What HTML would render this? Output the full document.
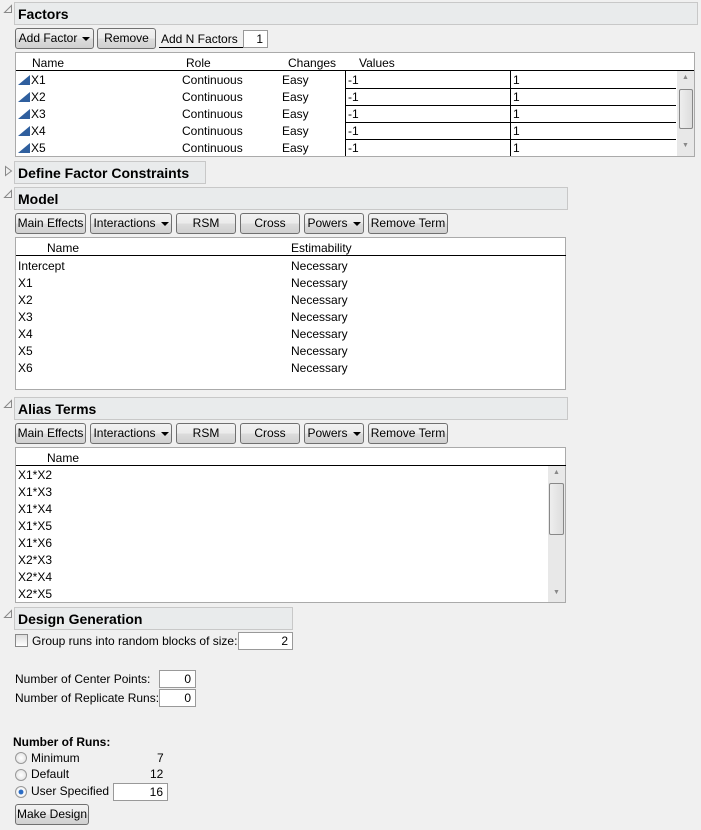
<!DOCTYPE html>
<html><head><meta charset="utf-8"><style>
*{box-sizing:border-box;margin:0;padding:0}
body{width:701px;height:830px;background:#f0f0f0;font-family:"Liberation Sans",sans-serif;font-size:12px;color:#000;position:relative;overflow:hidden}
.a{position:absolute;white-space:nowrap}
.hdr{position:absolute;background:#e9ebec;border:1px solid #c8c8c8;font-weight:bold;font-size:14px;padding:3px 0 0 3px;height:23px}
.tri{position:absolute}
.btn{position:absolute;height:21px;border:1px solid #707070;border-radius:3px;background:linear-gradient(#f2f2f2,#ebebeb 50%,#dcdcdc 51%,#d0d0d0);text-align:center;line-height:19px;font-size:12px}
.btn .dd{display:inline-block;width:0;height:0;border-left:4px solid transparent;border-right:4px solid transparent;border-top:4px solid #000;vertical-align:middle;margin-left:5px}
.box{position:absolute;background:#fff;border:1px solid #aaa}
.inp{position:absolute;background:#fff;border:1px solid #999;text-align:right;padding-right:4px;line-height:16px;height:18px}
.hl{position:absolute;height:1px;background:#000}
.vl{position:absolute;width:1px;background:#000}
.sb{position:absolute;background:#e8e8e8}
.thumb{position:absolute;border:1px solid #888;border-radius:2px;background:linear-gradient(90deg,#eee,#ddd)}
.fi{position:absolute;width:0;height:0;border-left:12px solid transparent;border-bottom:10px solid #2f5f9e}
.rad{position:absolute;width:12px;height:12px;border-radius:50%;border:1px solid #999;background:radial-gradient(#fff,#ddd)}
.ar{position:absolute;font-size:7px;color:#888}
</style></head><body>

<svg class="tri" style="left:3px;top:4px" width="10" height="10"><path d="M1.5 8.5 L8.5 8.5 L8.5 1.5 Z" fill="none" stroke="#888"/></svg>
<div class="hdr" style="left:14px;top:2px;width:684px">Factors</div>
<div class="btn" style="left:15px;top:28px;width:79px">Add Factor<span class="dd"></span></div>
<div class="btn" style="left:97px;top:28px;width:59px">Remove</div>
<div class="a" style="left:161px;top:32px">Add N Factors</div>
<div class="hl" style="left:159px;top:47px;width:84px"></div>
<div class="inp" style="left:243px;top:30px;width:25px">1</div>

<div class="box" style="left:15px;top:52px;width:680px;height:105px"></div>
<div class="a" style="left:32px;top:56px">Name</div>
<div class="a" style="left:186px;top:56px">Role</div>
<div class="a" style="left:288px;top:56px">Changes</div>
<div class="a" style="left:359px;top:56px">Values</div>
<div class="hl" style="left:16px;top:70px;width:678px"></div>
<div class="vl" style="left:345px;top:71px;height:85px"></div>
<div class="vl" style="left:510px;top:71px;height:85px"></div>
<div class="hl" style="left:345px;top:88px;width:331px"></div>
<div class="hl" style="left:345px;top:105px;width:331px"></div>
<div class="hl" style="left:345px;top:122px;width:331px"></div>
<div class="hl" style="left:345px;top:139px;width:331px"></div>
<div class="sb" style="left:677px;top:71px;width:17px;height:85px"></div>
<div class="thumb" style="left:679px;top:89px;width:14px;height:40px"></div>
<div class="ar" style="left:682px;top:74px">▲</div><div class="ar" style="left:682px;top:142px">▼</div>

<div class="fi" style="left:18px;top:75px"></div><div class="a" style="left:31px;top:73px">X1</div><div class="a" style="left:182px;top:73px">Continuous</div><div class="a" style="left:282px;top:73px">Easy</div><div class="a" style="left:348px;top:73px">-1</div><div class="a" style="left:513px;top:73px">1</div>
<div class="fi" style="left:18px;top:92px"></div><div class="a" style="left:31px;top:90px">X2</div><div class="a" style="left:182px;top:90px">Continuous</div><div class="a" style="left:282px;top:90px">Easy</div><div class="a" style="left:348px;top:90px">-1</div><div class="a" style="left:513px;top:90px">1</div>
<div class="fi" style="left:18px;top:109px"></div><div class="a" style="left:31px;top:107px">X3</div><div class="a" style="left:182px;top:107px">Continuous</div><div class="a" style="left:282px;top:107px">Easy</div><div class="a" style="left:348px;top:107px">-1</div><div class="a" style="left:513px;top:107px">1</div>
<div class="fi" style="left:18px;top:126px"></div><div class="a" style="left:31px;top:124px">X4</div><div class="a" style="left:182px;top:124px">Continuous</div><div class="a" style="left:282px;top:124px">Easy</div><div class="a" style="left:348px;top:124px">-1</div><div class="a" style="left:513px;top:124px">1</div>
<div class="fi" style="left:18px;top:143px"></div><div class="a" style="left:31px;top:141px">X5</div><div class="a" style="left:182px;top:141px">Continuous</div><div class="a" style="left:282px;top:141px">Easy</div><div class="a" style="left:348px;top:141px">-1</div><div class="a" style="left:513px;top:141px">1</div>

<svg class="tri" style="left:4px;top:165px" width="10" height="12"><path d="M1.5 1.5 L7.5 6 L1.5 10.5 Z" fill="none" stroke="#888"/></svg>
<div class="hdr" style="left:14px;top:161px;width:192px">Define Factor Constraints</div>

<svg class="tri" style="left:3px;top:189px" width="10" height="10"><path d="M1.5 8.5 L8.5 8.5 L8.5 1.5 Z" fill="none" stroke="#888"/></svg>
<div class="hdr" style="left:14px;top:187px;width:554px">Model</div>
<div class="btn" style="left:15px;top:213px;width:71px">Main Effects</div>
<div class="btn" style="left:90px;top:213px;width:82px">Interactions<span class="dd"></span></div>
<div class="btn" style="left:176px;top:213px;width:60px">RSM</div>
<div class="btn" style="left:240px;top:213px;width:60px">Cross</div>
<div class="btn" style="left:304px;top:213px;width:60px">Powers<span class="dd"></span></div>
<div class="btn" style="left:368px;top:213px;width:80px">Remove Term</div>
<div class="box" style="left:15px;top:237px;width:551px;height:153px"></div>
<div class="a" style="left:47px;top:241px">Name</div>
<div class="a" style="left:291px;top:241px">Estimability</div>
<div class="hl" style="left:16px;top:255px;width:550px"></div>
<div class="a" style="left:18px;top:259px">Intercept</div><div class="a" style="left:291px;top:259px">Necessary</div>
<div class="a" style="left:18px;top:276px">X1</div><div class="a" style="left:291px;top:276px">Necessary</div>
<div class="a" style="left:18px;top:293px">X2</div><div class="a" style="left:291px;top:293px">Necessary</div>
<div class="a" style="left:18px;top:310px">X3</div><div class="a" style="left:291px;top:310px">Necessary</div>
<div class="a" style="left:18px;top:327px">X4</div><div class="a" style="left:291px;top:327px">Necessary</div>
<div class="a" style="left:18px;top:344px">X5</div><div class="a" style="left:291px;top:344px">Necessary</div>
<div class="a" style="left:18px;top:361px">X6</div><div class="a" style="left:291px;top:361px">Necessary</div>

<svg class="tri" style="left:3px;top:399px" width="10" height="10"><path d="M1.5 8.5 L8.5 8.5 L8.5 1.5 Z" fill="none" stroke="#888"/></svg>
<div class="hdr" style="left:14px;top:397px;width:554px">Alias Terms</div>
<div class="btn" style="left:15px;top:423px;width:71px">Main Effects</div>
<div class="btn" style="left:90px;top:423px;width:82px">Interactions<span class="dd"></span></div>
<div class="btn" style="left:176px;top:423px;width:60px">RSM</div>
<div class="btn" style="left:240px;top:423px;width:60px">Cross</div>
<div class="btn" style="left:304px;top:423px;width:60px">Powers<span class="dd"></span></div>
<div class="btn" style="left:368px;top:423px;width:80px">Remove Term</div>
<div class="box" style="left:15px;top:447px;width:551px;height:156px"></div>
<div class="a" style="left:47px;top:451px">Name</div>
<div class="hl" style="left:16px;top:465px;width:550px"></div>
<div class="sb" style="left:548px;top:466px;width:17px;height:136px"></div>
<div class="thumb" style="left:549px;top:483px;width:15px;height:52px"></div>
<div class="ar" style="left:553px;top:469px">▲</div><div class="ar" style="left:553px;top:589px">▼</div>
<div class="a" style="left:18px;top:468px">X1*X2</div>
<div class="a" style="left:18px;top:485px">X1*X3</div>
<div class="a" style="left:18px;top:502px">X1*X4</div>
<div class="a" style="left:18px;top:519px">X1*X5</div>
<div class="a" style="left:18px;top:536px">X1*X6</div>
<div class="a" style="left:18px;top:553px">X2*X3</div>
<div class="a" style="left:18px;top:570px">X2*X4</div>
<div class="a" style="left:18px;top:587px">X2*X5</div>

<svg class="tri" style="left:3px;top:609px" width="10" height="10"><path d="M1.5 8.5 L8.5 8.5 L8.5 1.5 Z" fill="none" stroke="#888"/></svg>
<div class="hdr" style="left:14px;top:607px;width:279px">Design Generation</div>
<div class="a" style="left:15px;top:634px;width:13px;height:13px;border:1px solid #888;background:linear-gradient(#ddd,#fff)"></div>
<div class="a" style="left:32px;top:634px">Group runs into random blocks of size:</div>
<div class="inp" style="left:238px;top:632px;width:55px">2</div>
<div class="a" style="left:15px;top:672px">Number of Center Points:</div>
<div class="inp" style="left:159px;top:670px;width:37px">0</div>
<div class="a" style="left:15px;top:691px">Number of Replicate Runs:</div>
<div class="inp" style="left:159px;top:689px;width:37px">0</div>
<div class="a" style="left:13px;top:735px;font-weight:bold">Number of Runs:</div>
<div class="rad" style="left:15px;top:752px"></div><div class="a" style="left:31px;top:751px">Minimum</div><div class="a" style="left:157px;top:751px">7</div>
<div class="rad" style="left:15px;top:769px"></div><div class="a" style="left:31px;top:767px">Default</div><div class="a" style="left:150px;top:767px">12</div>
<div class="rad" style="left:15px;top:786px;background:radial-gradient(#2b6cc4 30%,#fff 40%,#ddd)"></div><div class="a" style="left:31px;top:784px">User Specified</div>
<div class="inp" style="left:113px;top:783px;width:55px">16</div>
<div class="btn" style="left:15px;top:804px;width:74px">Make Design</div>
</body></html>
